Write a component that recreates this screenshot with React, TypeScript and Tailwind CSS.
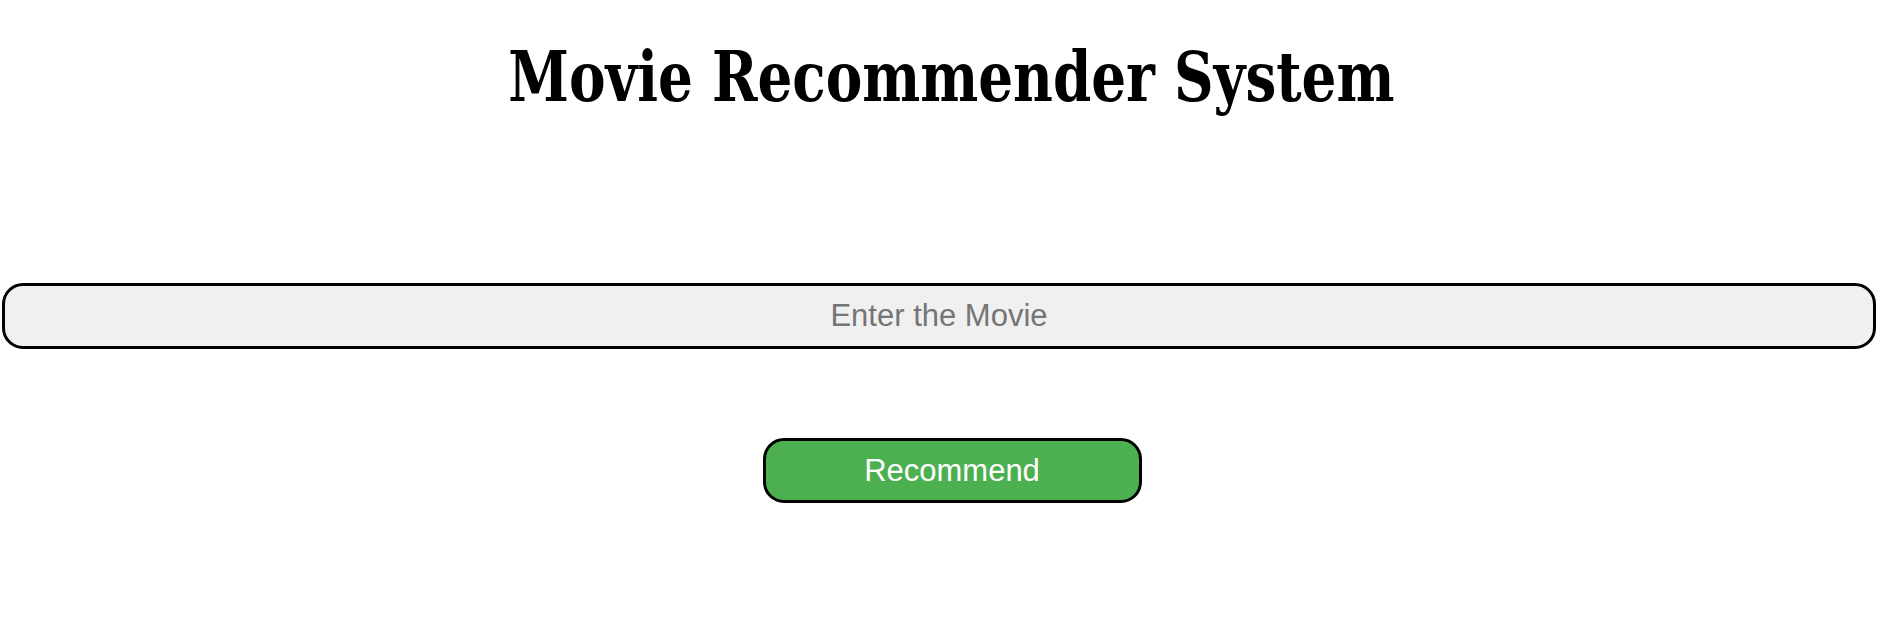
export default function App() {
  return (
    <div className="w-full h-[620px] bg-white">
      <h1
        className="pt-[42px] pl-[20px] text-center text-[70px] leading-none font-bold text-black [font-stretch:condensed]"
        style={{ fontFamily: '"DejaVu Serif", serif' }}
      >
        <span className="inline-block origin-center [transform:scaleX(0.87)]">Movie Recommender System</span>
      </h1>
      <div className="mt-[171px] pl-[2px] pr-[6px]">
        <input
          type="text"
          placeholder="Enter the Movie"
          className="block w-full h-[66px] rounded-[21px] border-[3px] border-black bg-[#f0f0f0] text-center text-[31px] text-black placeholder:text-[#757575] outline-none"
          style={{ fontFamily: '"Liberation Sans", Arial, sans-serif' }}
        />
      </div>
      <div className="mt-[89px] flex justify-center pl-[22px]">
        <button
          className="w-[379px] h-[65px] rounded-[21px] border-[3px] border-black bg-[#4caf50] text-white text-[31px] leading-none"
          style={{ fontFamily: '"Liberation Sans", Arial, sans-serif' }}
        >
          Recommend
        </button>
      </div>
    </div>
  );
}
